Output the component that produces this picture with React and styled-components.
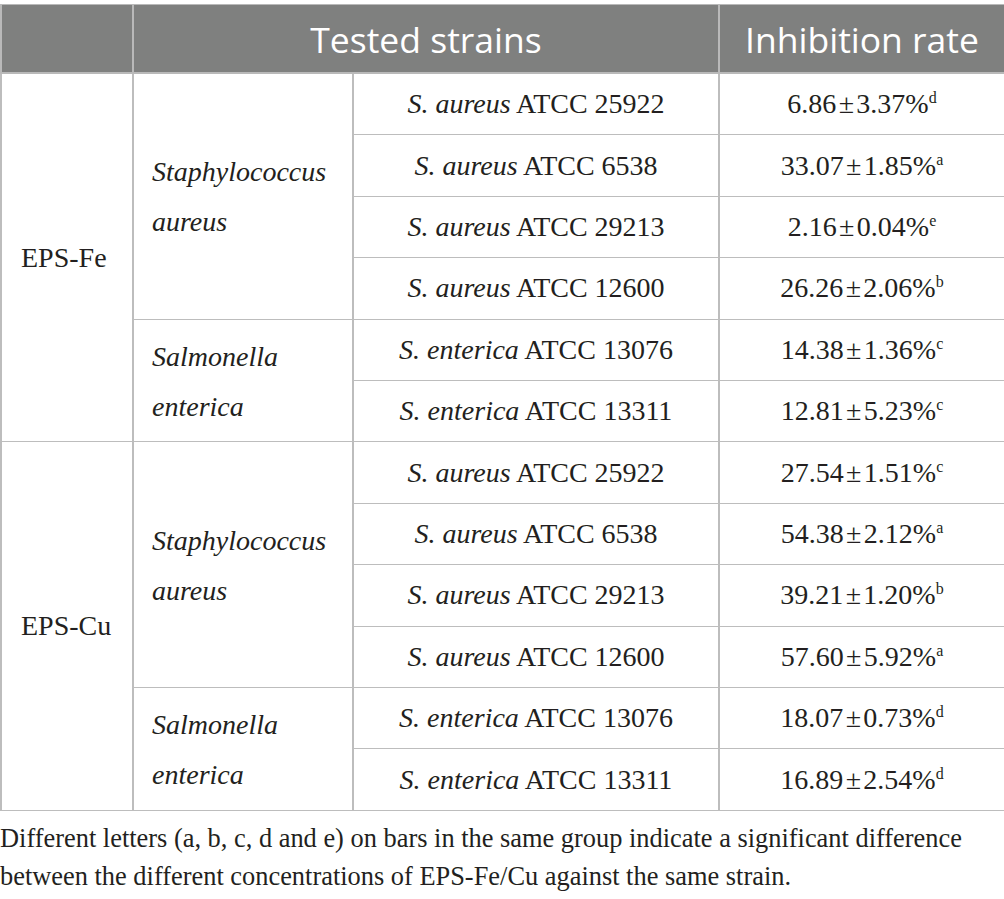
import React from 'react';
import styled, { createGlobalStyle } from 'styled-components';

const GlobalStyle = createGlobalStyle`
  html, body {
    margin: 0;
    padding: 0;
    background: #ffffff;
  }
`;

const Page = styled.div`
  width: 1004px;
  padding-top: 4px;
  font-family: "Liberation Serif", "DejaVu Serif", serif;
  color: #231f20;
`;

const Table = styled.table`
  width: 1004px;
  border-collapse: collapse;
  table-layout: fixed;
`;

const HeadCell = styled.th`
  height: 67px;
  padding: 0;
  background-color: #7f807f;
  color: #ffffff;
  font-family: "Open Sans", "Noto Sans", sans-serif;
  font-weight: 400;
  font-size: 35.5px;
  text-align: center;
  border: 2px solid #b9b9b9;
  border-top-width: 1px;
`;

const Cell = styled.td`
  height: 60.42px;
  padding: 0;
  font-size: 28px;
  text-align: ${(p) => (p.$left ? 'left' : 'center')};
  padding-left: ${(p) => p.$pad || 0}px;
  border: 1px solid #bdbdbd;
  border-left-width: 2px;
  border-right-width: 2px;
  vertical-align: middle;
`;

const Species = styled.div`
  font-style: italic;
  line-height: 50px;
  padding-top: 2px;
`;

const Sup = styled.sup`
  font-size: 16px;
  vertical-align: 10px;
  line-height: 0;
`;

const Caption = styled.p`
  margin: 8px 0 0 0;
  font-size: 26.4px;
  line-height: 38px;
  color: #231f20;
`;

const groups = [
  {
    name: 'EPS-Fe',
    species: [
      {
        name: 'Staphylococcus aureus',
        rows: [
          ['S. aureus', 'ATCC 25922', '6.86', '3.37', 'd'],
          ['S. aureus', 'ATCC 6538', '33.07', '1.85', 'a'],
          ['S. aureus', 'ATCC 29213', '2.16', '0.04', 'e'],
          ['S. aureus', 'ATCC 12600', '26.26', '2.06', 'b'],
        ],
      },
      {
        name: 'Salmonella enterica',
        rows: [
          ['S. enterica', 'ATCC 13076', '14.38', '1.36', 'c'],
          ['S. enterica', 'ATCC 13311', '12.81', '5.23', 'c'],
        ],
      },
    ],
  },
  {
    name: 'EPS-Cu',
    species: [
      {
        name: 'Staphylococcus aureus',
        rows: [
          ['S. aureus', 'ATCC 25922', '27.54', '1.51', 'c'],
          ['S. aureus', 'ATCC 6538', '54.38', '2.12', 'a'],
          ['S. aureus', 'ATCC 29213', '39.21', '1.20', 'b'],
          ['S. aureus', 'ATCC 12600', '57.60', '5.92', 'a'],
        ],
      },
      {
        name: 'Salmonella enterica',
        rows: [
          ['S. enterica', 'ATCC 13076', '18.07', '0.73', 'd'],
          ['S. enterica', 'ATCC 13311', '16.89', '2.54', 'd'],
        ],
      },
    ],
  },
];

const App = () => {
  const body = [];
  groups.forEach((g) => {
    const total = g.species.reduce((n, s) => n + s.rows.length, 0);
    g.species.forEach((s, si) => {
      s.rows.forEach((r, ri) => {
        body.push(
          <tr key={`${g.name}-${si}-${ri}`}>
            {si === 0 && ri === 0 && (
              <Cell rowSpan={total} $left $pad={19}>
                {g.name}
              </Cell>
            )}
            {ri === 0 && (
              <Cell rowSpan={s.rows.length} $left $pad={18}>
                <Species>{s.name}</Species>
              </Cell>
            )}
            <Cell>
              <i>{r[0]}</i> {r[1]}
            </Cell>
            <Cell>
              {r[2]}
              {'\u200a±\u200a'}
              {r[3]}%<Sup>{r[4]}</Sup>
            </Cell>
          </tr>
        );
      });
    });
  });

  return (
    <Page>
      <GlobalStyle />
      <Table>
        <colgroup>
          <col style={{ width: 132 }} />
          <col style={{ width: 220 }} />
          <col style={{ width: 366 }} />
          <col style={{ width: 286 }} />
        </colgroup>
        <thead>
          <tr>
            <HeadCell />
            <HeadCell colSpan={2}>Tested strains</HeadCell>
            <HeadCell>Inhibition rate</HeadCell>
          </tr>
        </thead>
        <tbody>{body}</tbody>
      </Table>
      <Caption>
        Different letters (a, b, c, d and e) on bars in the same group indicate a significant difference
        between the different concentrations of EPS-Fe/Cu against the same strain.
      </Caption>
    </Page>
  );
};

export default App;
